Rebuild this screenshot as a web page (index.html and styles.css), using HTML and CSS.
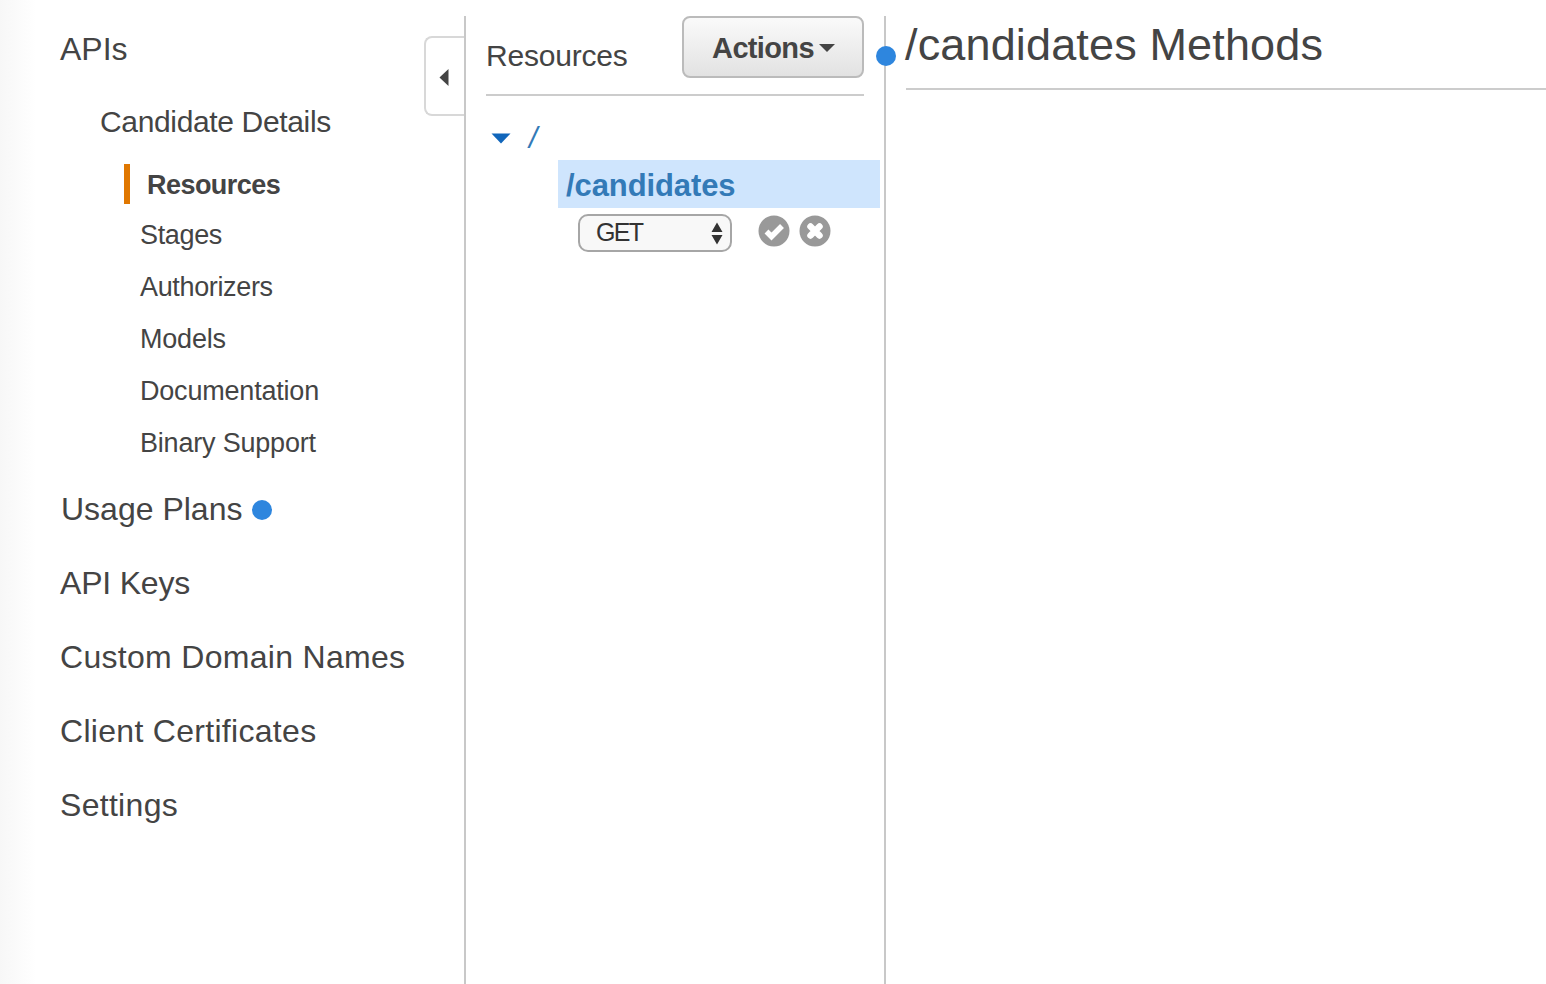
FILE: index.html
```html
<!DOCTYPE html>
<html lang="en">
<head>
<meta charset="utf-8">
<title>/candidates Methods</title>
<link rel="stylesheet" href="styles.css">
</head>
<body>
<div class="page">
  <nav class="sidebar">
    <a class="nav-top nav-apis">APIs</a>
    <a class="nav-api">Candidate Details</a>
    <ul class="subnav">
      <li class="sub-active">Resources</li>
      <li class="sub-tight">Stages</li>
      <li class="sub-tight">Authorizers</li>
      <li>Models</li>
      <li>Documentation</li>
      <li>Binary Support</li>
    </ul>
    <a class="nav-top nav-usage">Usage Plans <span class="dot dot-inline"></span></a>
    <a class="nav-top">API Keys</a>
    <a class="nav-top nav-wide">Custom Domain Names</a>
    <a class="nav-top nav-wide">Client Certificates</a>
    <a class="nav-top nav-wide">Settings</a>
    <button class="collapse" aria-label="Collapse">
      <svg width="10" height="17" viewBox="0 0 10 17"><path d="M9.500 0v17L0.500 8.500z" fill="#444"/></svg>
    </button>
  </nav>
  <section class="resources">
    <header class="res-head">
      <h2 class="res-title">Resources</h2>
      <button class="actions"><span class="actions-label">Actions</span><span class="caret"></span></button>
    </header>
    <div class="tree-root">
      <svg class="tree-arrow" width="20" height="11" viewBox="0 0 20 11"><path d="M0.500 0.500h19L10 10.500z" fill="#1166bb"/></svg>
      <span class="root-link">/</span>
    </div>
    <div class="tree-child"><span class="tree-child-label">/candidates</span></div>
    <div class="method-row">
      <div class="select">GET
        <svg class="updown" width="12" height="23" viewBox="0 0 12 23"><path d="M6 0.500l5.500 9.500H0.500zM6 22.500L0.500 13h11z" fill="#333"/></svg>
      </div>
      <svg class="round" width="32" height="32" viewBox="0 0 32 32"><circle cx="16" cy="16" r="15.500" fill="#999"/><path d="M8.500 16.500l5 5L24 11" fill="none" stroke="#fff" stroke-width="5.500"/></svg>
      <svg class="round" width="32" height="32" viewBox="0 0 32 32"><circle cx="16" cy="16" r="15.500" fill="#999"/><path d="M11.500 11.500l9 9M20.500 11.500l-9 9" fill="none" stroke="#fff" stroke-width="6.500" stroke-linecap="round"/></svg>
    </div>
  </section>
  <main class="methods">
    <span class="dot dot-edge"></span>
    <h1 class="methods-title"><span class="methods-label">/candidates Methods</span></h1>
  </main>
</div>
</body>
</html>
```
FILE: styles.css
```css
* { box-sizing: border-box; }
html, body { margin: 0; height: 100%; background: #fff; }
body {
  font-family: "Liberation Sans", Arial, sans-serif;
  color: #444;
  overflow: hidden;
}
.page {
  display: grid;
  grid-template-columns: 466px 420px 1fr;
  height: 984px;
  padding-top: 16px;
}
.sidebar {
  position: relative;
  display: flex;
  flex-direction: column;
  align-items: flex-start;
  margin-top: -16px;
  padding: 31px 0 0 60px;
  background: linear-gradient(to right, #f7f7f7, #fff 36px);
}
.sidebar::after {
  content: "";
  position: absolute;
  top: 16px;
  bottom: 0;
  right: 0;
  width: 2px;
  background: #c8c8c8;
}
.nav-top {
  display: block;
  font-size: 32px;
  line-height: 37px;
  margin-bottom: 37px;
  letter-spacing: -0.2px;
}
.nav-wide { letter-spacing: 0.3px; }
.nav-apis { margin-bottom: 0; letter-spacing: 0; }
.nav-api {
  display: block;
  margin: 36px 0 0 40px;
  font-size: 30px;
  line-height: 36px;
  letter-spacing: -0.35px;
}
.subnav {
  list-style: none;
  margin: 24px 0 0 64px;
  padding: 0 0 0 16px;
  font-size: 27px;
  line-height: 52px;
}
.subnav li { letter-spacing: -0.2px; }
.subnav .sub-tight { letter-spacing: -0.35px; }
.subnav .sub-active {
  position: relative;
  margin-left: 7px;
  height: 40px;
  line-height: 42px;
  margin-bottom: 5px;
  font-weight: 700;
  letter-spacing: -0.55px;
}
.sub-active::before {
  content: "";
  position: absolute;
  left: -23px;
  top: 0;
  width: 6px;
  height: 40px;
  background: #e07700;
}
.nav-usage {
  margin-top: 22px;
  margin-left: 1px;
  display: flex;
  align-items: center;
  gap: 10px;
  letter-spacing: 0;
}
.dot {
  display: inline-block;
  width: 20px;
  height: 20px;
  border-radius: 50%;
  background: #2e86de;
}
.collapse {
  position: absolute;
  top: 36px;
  right: 2px;
  width: 40px;
  height: 80px;
  padding: 3px 0 0 13px;
  display: flex;
  align-items: center;
  justify-content: flex-start;
  background: #fff;
  border: 2px solid #d8d8d8;
  border-right: 0;
  border-radius: 8px 0 0 8px;
}
.resources {
  border-right: 2px solid #c8c8c8;
  padding: 0 20px 0 0;
}
.res-head {
  display: flex;
  justify-content: space-between;
  align-items: flex-start;
  height: 80px;
  margin: 0 0 0 20px;
  border-bottom: 2px solid #ccc;
}
.res-title {
  margin: 23px 0 0;
  font-size: 30px;
  line-height: 34px;
  font-weight: 400;
  letter-spacing: -0.2px;
}
.actions {
  display: flex;
  align-items: center;
  justify-content: center;
  width: 182px;
  height: 62px;
  margin: 0;
  padding: 2px 0 0 1px;
  font: 700 29px "Liberation Sans", Arial, sans-serif;
  color: #444;
  border: 2px solid #bbb;
  border-radius: 8px;
  background: linear-gradient(to bottom, #fafafa, #e2e2e2);
}
.actions-label { letter-spacing: -0.65px; }
.caret {
  width: 0;
  height: 0;
  margin-left: 5px;
  border-left: 8px solid transparent;
  border-right: 8px solid transparent;
  border-top: 8px solid #444;
}
.tree-root {
  display: flex;
  align-items: center;
  height: 48px;
  margin-top: 18px;
  padding-left: 25px;
  color: #1166bb;
}
.tree-arrow { flex: none; }
.root-link {
  margin-left: 18px;
  font-size: 30px;
  font-style: italic;
  color: #337ab7;
}
.tree-child {
  display: flex;
  align-items: center;
  height: 48px;
  margin: -2px -16px 0 92px;
  padding: 4px 0 0 8px;
  background: #cfe5fd;
  color: #337ab7;
  font-size: 31px;
  font-weight: 700;
}
.tree-child-label { letter-spacing: -0.1px; }
.method-row {
  display: flex;
  align-items: center;
  margin: 6px 0 0 112px;
}
.select {
  position: relative;
  width: 154px;
  height: 38px;
  padding-left: 16px;
  font-size: 25px;
  line-height: 32px;
  letter-spacing: -1.7px;
  color: #333;
  background: #f8f8f8;
  border: 2px solid #a6a6a6;
  border-radius: 10px;
}
.updown {
  position: absolute;
  right: 7px;
  top: 6px;
}
.round { flex: none; margin-left: 9px; margin-top: -4px; }
.select + .round { margin-left: 26px; }
.methods {
  position: relative;
  padding: 0 0 0 20px;
}
.dot-edge {
  position: absolute;
  left: -10px;
  top: 30px;
}
.methods-title {
  margin: 0;
  height: 74px;
  padding-top: 2px;
  font-size: 45px;
  line-height: 54px;
  font-weight: 400;
  border-bottom: 2px solid #ccc;
}
.methods-label {
  margin-left: -1px;
  letter-spacing: 0.15px;
}
```
